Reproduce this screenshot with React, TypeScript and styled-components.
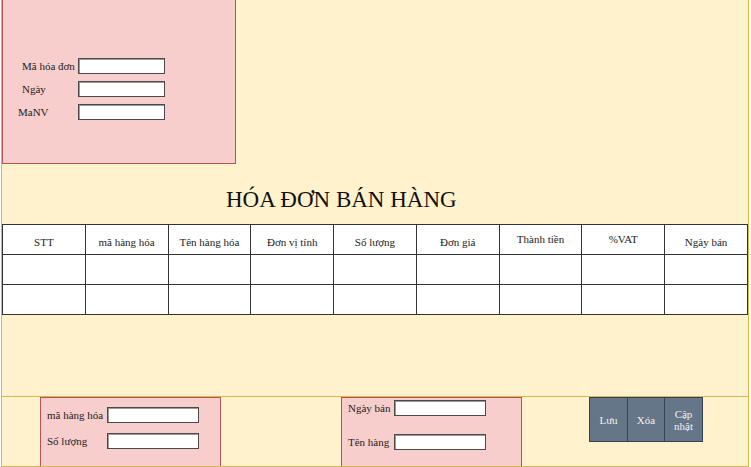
import styled, { createGlobalStyle } from "styled-components";

const GlobalStyle = createGlobalStyle`
  html, body {
    margin: 0;
    padding: 0;
    background: #ffffff;
  }
  body {
    font-family: "Liberation Serif", "Times New Roman", serif;
    color: #222;
  }
`;

const serif = `"Liberation Serif", "Times New Roman", serif`;

const Frame = styled.div`
  width: 748px;
  height: 467px;
  margin-left: 1px;
  box-sizing: border-box;
  background: #fff2cc;
  border-left: 1px solid #d6b656;
  border-right: 1px solid #d6b656;
  display: flex;
  flex-direction: column;
`;

const InfoBox = styled.div`
  width: 234px;
  height: 164px;
  box-sizing: border-box;
  background: #f8cecc;
  border: 1px solid #b85450;
  border-top: none;
  padding-top: 58px;
  display: flex;
  flex-direction: column;
  gap: 7px;
`;

const Row = styled.div`
  display: flex;
  align-items: center;
`;

const Label = styled.span<{ $indent: number; $width: number }>`
  box-sizing: border-box;
  width: ${(p) => p.$width}px;
  padding-left: ${(p) => p.$indent}px;
  font-family: ${serif};
  font-size: 11px;
  color: #222;
  white-space: nowrap;
`;

const Field = styled.input<{ $width: number }>`
  width: ${(p) => p.$width}px;
  height: 16px;
  box-sizing: border-box;
  margin: 0;
  padding: 0 2px;
  background: #fff;
  border: 1px solid #4a4a4a;
  box-shadow: inset 1px 1px 0 #9a9a9a;
  outline: none;
`;

const Title = styled.h1`
  margin: 0;
  height: 60px;
  box-sizing: border-box;
  padding: 24px 0 0 224px;
  font-family: ${serif};
  font-size: 23px;
  line-height: 23px;
  font-weight: normal;
  color: #111;
  white-space: nowrap;
`;

const Grid = styled.table`
  width: 746px;
  border-collapse: collapse;
  table-layout: fixed;
  background: #fff;
`;

const HeadCell = styled.td<{ $raised?: boolean }>`
  height: 30px;
  box-sizing: border-box;
  padding: ${(p) => (p.$raised ? "8px" : "11px")} 0 0;
  border: 1px solid #333;
  text-align: center;
  vertical-align: top;
  font-family: ${serif};
  font-size: 11px;
  line-height: 12px;
  color: #222;
`;

const Cell = styled.td`
  height: 30px;
  box-sizing: border-box;
  padding: 0;
  border: 1px solid #333;
`;

const Spacer = styled.div`
  flex: 1;
`;

const BottomBar = styled.div`
  height: 71px;
  box-sizing: border-box;
  border-top: 1px solid #d6b656;
  border-bottom: 1px solid #d6b656;
  padding-left: 38px;
  display: flex;
  align-items: flex-start;
`;

const EntryBox = styled.div<{ $top: number; $gap: number; $space: number }>`
  width: 181px;
  height: 69px;
  box-sizing: border-box;
  background: #f8cecc;
  border: 1px solid #b85450;
  border-bottom: none;
  margin-right: ${(p) => p.$space}px;
  padding: ${(p) => p.$top}px 0 0 6px;
  display: flex;
  flex-direction: column;
  gap: ${(p) => p.$gap}px;
`;

const Buttons = styled.div`
  display: flex;
`;

const Action = styled.button<{ $width: number }>`
  width: ${(p) => p.$width}px;
  height: 45px;
  box-sizing: border-box;
  margin: 0 0 0 -1px;
  padding: 0;
  background: #647687;
  border: 1px solid #314354;
  color: #f2f2f2;
  font-family: ${serif};
  font-size: 11px;
  line-height: 12px;
  &:first-child {
    margin-left: 0;
  }
`;

const columns = [
  { name: "STT" },
  { name: "mã hàng hóa" },
  { name: "Tên hàng hóa" },
  { name: "Đơn vị tính" },
  { name: "Số lượng" },
  { name: "Đơn giá" },
  { name: "Thành tiền", raised: true },
  { name: "%VAT", raised: true },
  { name: "Ngày bán" },
];

function App() {
  return (
    <>
      <GlobalStyle />
      <Frame>
        <InfoBox>
          <Row>
            <Label $indent={19} $width={75}>Mã hóa đơn</Label>
            <Field $width={87} />
          </Row>
          <Row>
            <Label $indent={19} $width={75}>Ngày</Label>
            <Field $width={87} />
          </Row>
          <Row>
            <Label $indent={15} $width={75}>MaNV</Label>
            <Field $width={87} />
          </Row>
        </InfoBox>
        <Title>HÓA ĐƠN BÁN HÀNG</Title>
        <Grid>
          <tbody>
            <tr>
              {columns.map((c) => (
                <HeadCell key={c.name} $raised={c.raised}>{c.name}</HeadCell>
              ))}
            </tr>
            {[0, 1].map((r) => (
              <tr key={r}>
                {columns.map((c) => (
                  <Cell key={c.name} />
                ))}
              </tr>
            ))}
          </tbody>
        </Grid>
        <Spacer />
        <BottomBar>
          <EntryBox $top={9} $gap={10} $space={120}>
            <Row>
              <Label $indent={0} $width={60}>mã hàng hóa</Label>
              <Field $width={92} />
            </Row>
            <Row>
              <Label $indent={0} $width={60}>Số lượng</Label>
              <Field $width={92} />
            </Row>
          </EntryBox>
          <EntryBox $top={2} $gap={18} $space={67}>
            <Row>
              <Label $indent={0} $width={46}>Ngày bán</Label>
              <Field $width={92} />
            </Row>
            <Row>
              <Label $indent={0} $width={46}>Tên hàng</Label>
              <Field $width={92} />
            </Row>
          </EntryBox>
          <Buttons>
            <Action $width={39}>Lưu</Action>
            <Action $width={38}>Xóa</Action>
            <Action $width={39}>Cập<br />nhật</Action>
          </Buttons>
        </BottomBar>
      </Frame>
    </>
  );
}

export default App;
